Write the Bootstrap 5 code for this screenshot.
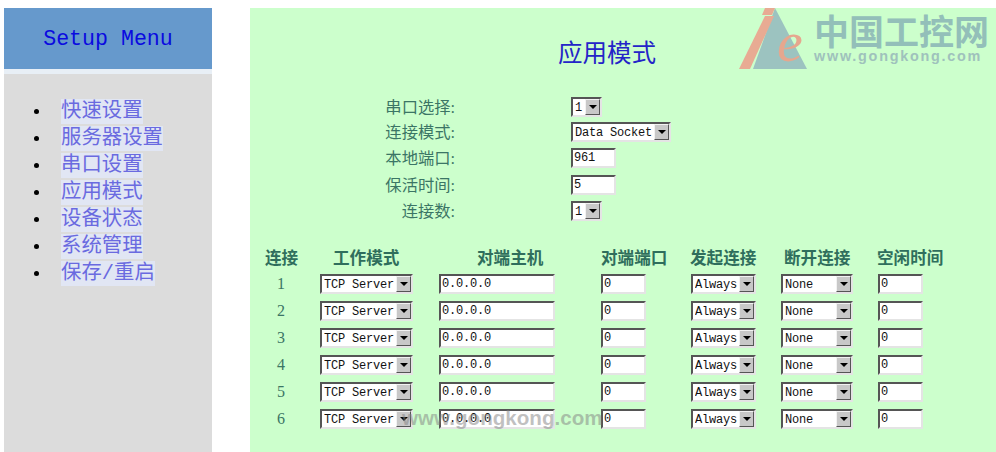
<!DOCTYPE html>
<html lang="zh-CN">
<head>
  <meta charset="UTF-8" />
  <meta name="viewport" content="width=device-width, initial-scale=1.0" />
  <title>应用模式</title>
  <link href="https://cdn.jsdelivr.net/npm/bootstrap@5.3.0/dist/css/bootstrap.min.css" rel="stylesheet" />
  <style>
    html, body { height: 452px; overflow: hidden; }
    body {
      background-color: #fff;
      font-family: "Liberation Serif", "Noto Sans CJK SC", serif;
      padding-top: 8px;
    }
    .side-panel {
      width: 208px;
      margin-left: 4px;
      margin-right: 38px;
      background-color: #dcdcdc;
      flex-shrink: 0;
    }
    .side-head {
      height: 61px;
      background-color: #6699cc;
      color: #0a0ae0;
      font-family: "Liberation Mono", "Noto Sans CJK SC", monospace;
      font-size: 21.6px;
      padding-top: 2px;
    }
    .side-band { height: 5px; background-color: #e8eff6; }
    .side-list { padding: 24px 0 0 30px; }
    .side-list li { height: 27px; gap: 22px; }
    .side-dot { width: 5px; height: 5px; background-color: #000; border-radius: 50%; }
    .side-list a {
      color: #6a6ae0;
      background-color: #e1e6f4;
      font-family: "Liberation Mono", "Noto Sans CJK SC", monospace;
      font-size: 20.4px;
      line-height: 25px;
      text-decoration: none;
    }
    .main-panel { background-color: #ccffcc; height: 444px; }
    .page-title {
      width: 714px;
      padding-top: 32px;
      margin-bottom: 26px;
      color: #2424c8;
      font-size: 24.5px;
      line-height: 28px;
      text-align: center;
    }
    .top-form {
      display: grid;
      grid-template-columns: 205px 1fr;
      grid-template-rows: 25px 26px 26px 27px 26px;
      column-gap: 116px;
      align-items: center;
    }
    .form-text { color: #3b7565; font-size: 16.3px; line-height: 20px; padding-bottom: 2px; text-align: right; }
    .conn-table {
      display: grid;
      grid-template-columns: 58px 119px 162px 90px 90px 97px 60px;
      grid-template-rows: 22px repeat(6, 27px);
      align-items: center;
      margin: 24px 0 0 12px;
      white-space: nowrap;
    }
    .conn-head { color: #2f6e5c; font-size: 16.6px; font-weight: 700; line-height: 20px; }
    .conn-num { width: 38px; text-align: center; color: #3b7565; font-size: 16px; }
    .pad-a { padding-left: 3px; }
    .pad-m { padding-left: 13px; }
    .pad-h { padding-left: 38px; }
    .pad-i { margin-left: -1px; }
    .pad-d { padding-left: 3px; }

    .old-input, .old-select {
      height: 20px;
      border: 2px solid;
      border-color: #555 #e4e4e4 #e4e4e4 #555;
      background-color: #fff;
      font-family: "Liberation Mono", "Noto Sans CJK SC", monospace;
      font-size: 12px;
      letter-spacing: -.2px;
      color: #111;
      border-radius: 0;
    }
    .old-input { padding: 0 0 0 1px; display: block; outline: none; }
    .old-select { display: flex; align-items: stretch; }
    .old-select select {
      flex: 1;
      min-width: 0;
      border: 0;
      padding: 0 0 0 2px;
      appearance: none;
      background: #fff;
      font: inherit;
      letter-spacing: inherit;
      color: inherit;
      outline: none;
    }
    .old-arrow {
      width: 15px;
      background-color: #c8c8c8;
      border: 1px solid;
      border-color: #f2f2f2 #555 #555 #f2f2f2;
      display: flex;
      align-items: center;
      justify-content: center;
    }
    .old-arrow::before {
      content: "";
      border-left: 4px solid transparent;
      border-right: 4px solid transparent;
      border-top: 4px solid #000;
    }
    .w-one { width: 31px; }
    .w-data { width: 100px; }
    .w-port { width: 45px; }
    .w-mode { width: 93px; }
    .w-host { width: 116px; }
    .w-always { width: 65px; }
    .w-none { width: 72px; }

    .logo-mark { position: absolute; left: 489px; top: 0; pointer-events: none; }
    .logo-e {
      position: absolute;
      left: 527px;
      top: 4px;
      color: #e6a78e;
      font-size: 58px;
      font-style: italic;
      line-height: 60px;
    }
    .logo-word {
      position: absolute;
      left: 564px;
      top: 8px;
      width: 180px;
      color: #93bfb9;
      font-family: "Liberation Sans", "Noto Sans CJK SC", sans-serif;
      font-size: 35px;
      font-weight: 700;
      line-height: 34px;
      white-space: nowrap;
    }
    .logo-url {
      color: #9fc2bc;
      font-size: 14.4px;
      font-weight: 700;
      letter-spacing: 1.75px;
      line-height: 13px;
    }
    .wm-bottom {
      position: absolute;
      left: 152px;
      top: 396px;
      color: rgba(130, 130, 130, .5);
      font-family: "Liberation Sans", sans-serif;
      font-size: 20.6px;
      font-weight: 700;
      line-height: 28px;
      white-space: nowrap;
    }
  </style>
</head>
<body>
  <div class="d-flex">
    <div class="side-panel">
      <div class="side-head d-flex align-items-center justify-content-center">Setup Menu</div>
      <div class="side-band"></div>
      <ul class="side-list list-unstyled m-0">
        <li class="d-flex align-items-center"><span class="side-dot"></span><a href="#">快速设置</a></li>
        <li class="d-flex align-items-center"><span class="side-dot"></span><a href="#">服务器设置</a></li>
        <li class="d-flex align-items-center"><span class="side-dot"></span><a href="#">串口设置</a></li>
        <li class="d-flex align-items-center"><span class="side-dot"></span><a href="#">应用模式</a></li>
        <li class="d-flex align-items-center"><span class="side-dot"></span><a href="#">设备状态</a></li>
        <li class="d-flex align-items-center"><span class="side-dot"></span><a href="#">系统管理</a></li>
        <li class="d-flex align-items-center"><span class="side-dot"></span><a href="#">保存/重启</a></li>
      </ul>
    </div>

    <div class="main-panel flex-grow-1 position-relative">
      <h1 class="page-title fw-normal">应用模式</h1>

      <form class="top-form">
        <div class="form-text">串口选择:</div>
        <div class="old-select w-one"><select><option>1</option></select><span class="old-arrow"></span></div>
        <div class="form-text">连接模式:</div>
        <div class="old-select w-data"><select><option>Data Socket</option></select><span class="old-arrow"></span></div>
        <div class="form-text">本地端口:</div>
        <input class="old-input w-port" type="text" value="961">
        <div class="form-text">保活时间:</div>
        <input class="old-input w-port" type="text" value="5">
        <div class="form-text">连接数:</div>
        <div class="old-select w-one"><select><option>1</option></select><span class="old-arrow"></span></div>
      </form>

      <div class="conn-table" id="connTable">
        <div class="conn-head pad-a">连接</div>
        <div class="conn-head pad-m">工作模式</div>
        <div class="conn-head pad-h">对端主机</div>
        <div class="conn-head">对端端口</div>
        <div class="conn-head pad-i">发起连接</div>
        <div class="conn-head pad-d">断开连接</div>
        <div class="conn-head pad-i">空闲时间</div>
      </div>

      <svg class="logo-mark" width="70" height="62" viewBox="0 0 70 62">
        <polygon points="36,0 68,61 14,61" fill="#9cc3c0" />
        <polygon points="0,61 11,61 35,8 26,8" fill="#e8ab93" />
        <polygon points="26,0 36,0 33,7 23,7" fill="#e8ab93" />
      </svg>
      <div class="logo-e">e</div>
      <div class="logo-word">中国工控网<div class="logo-url">www.gongkong.com</div></div>
      <div class="wm-bottom">www.gongkong.com</div>
    </div>
  </div>

  <script src="https://cdn.jsdelivr.net/npm/bootstrap@5.3.0/dist/js/bootstrap.bundle.min.js"></script>
  <script>
    // six identical connection rows
    function sel(cls, text) {
      return '<div class="old-select ' + cls + '"><select><option>' + text + '</option></select><span class="old-arrow"></span></div>';
    }
    function inp(cls, val) {
      return '<input class="old-input ' + cls + '" type="text" value="' + val + '">';
    }
    let rows = '';
    for (let i = 1; i <= 6; i++) {
      rows += '<div class="conn-num">' + i + '</div>'
        + '<div>' + sel('w-mode', 'TCP Server') + '</div>'
        + '<div>' + inp('w-host', '0.0.0.0') + '</div>'
        + '<div>' + inp('w-port', '0') + '</div>'
        + '<div>' + sel('w-always', 'Always') + '</div>'
        + '<div>' + sel('w-none', 'None') + '</div>'
        + '<div>' + inp('w-port', '0') + '</div>';
    }
    document.getElementById('connTable').insertAdjacentHTML('beforeend', rows);
  </script>
</body>
</html>
